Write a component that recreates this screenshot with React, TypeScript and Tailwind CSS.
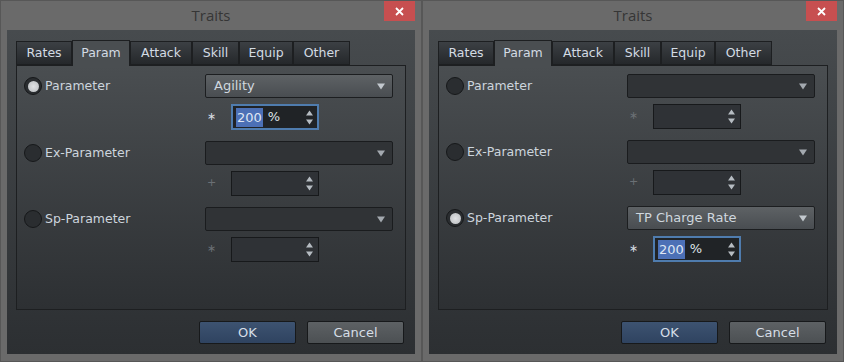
import React from "react";

type Active = "param" | "sp";

const FONT = { fontFamily: '"DejaVu Sans", sans-serif' };

const TABS = [
  { label: "Rates", w: "w-[56px]" },
  { label: "Param", w: "w-[58px]" },
  { label: "Attack", w: "w-[62px]" },
  { label: "Skill", w: "w-[47px]" },
  { label: "Equip", w: "w-[54px]" },
  { label: "Other", w: "w-[57px]" },
];

function Radio({ on }: { on: boolean }) {
  return (
    <div className="flex h-[18px] w-[18px] shrink-0 items-center justify-center rounded-full border border-[#16181a] bg-[#2a2d30]">
      {on && <div className="h-[11px] w-[11px] rounded-full bg-radial from-[#e0e2e4] to-[#b8bbbe]" />}
    </div>
  );
}

function DownArrow({ color }: { color: string }) {
  return (
    <svg width="8" height="7" viewBox="0 0 8 7">
      <path d="M0 0.5H8L4 6.5Z" fill={color} />
    </svg>
  );
}

function Combo({ value }: { value?: string }) {
  const enabled = !!value;
  return (
    <div
      className={
        enabled
          ? "flex h-[24px] w-[188px] items-center justify-between rounded-[2px] border border-[#1c1e20] bg-linear-to-b from-[#5e6265] to-[#494d51] pl-[8px] pr-[7px]"
          : "flex h-[24px] w-[188px] items-center justify-end rounded-[2px] border border-[#1a1c1e] bg-[#303336] pr-[7px]"
      }
    >
      {enabled && <span className="text-[13px] text-[#cfd7df]">{value}</span>}
      <DownArrow color={enabled ? "#c2c8ce" : "#a3a9af"} />
    </div>
  );
}

function Spin({ sym, on }: { sym: string; on: boolean }) {
  return (
    <div className="mt-[6px] flex items-center pl-[181px]">
      <span className={`w-[13px] text-center text-[11px] ${on ? "text-[#d8dde2]" : "text-[#6b7075]"}`}>{sym}</span>
      <div
        className={
          on
            ? "ml-[13px] flex h-[26px] w-[88px] items-center justify-between border-2 border-[#4f7cae] bg-[#202326] pl-[3px] pr-[4px]"
            : "ml-[13px] flex h-[25px] w-[88px] items-center justify-end border border-[#17191b] bg-[#2f3236] pr-[5px]"
        }
      >
        {on && (
          <div className="flex items-center text-[13px]">
            <span className="bg-[#4c70b6] px-[1px] leading-[19px] text-[#dfe6f3]">200</span>
            <span className="ml-[5px] text-[#dfe3e8]">%</span>
          </div>
        )}
        <svg width="7" height="15" viewBox="0 0 7 15">
          <path d="M0 5.5H7L3.5 0.5Z" fill="#b6bcc2" />
          <path d="M0 9.5H7L3.5 14.5Z" fill="#b6bcc2" />
        </svg>
      </div>
    </div>
  );
}

function ParamRow({ label, on, value, sym }: { label: string; on: boolean; value: string; sym: string }) {
  return (
    <div className="flex flex-col">
      <div className="flex items-center">
        <div className="flex w-[181px] items-center gap-[3px]">
          <Radio on={on} />
          <span className="text-[12.5px] text-[#cdd5dd]">{label}</span>
        </div>
        <Combo value={on ? value : undefined} />
      </div>
      <Spin sym={sym} on={on} />
    </div>
  );
}

function TraitsWindow({ active }: { active: Active }) {
  return (
    <div className="flex h-[362px] w-[422px] flex-col border border-[#575757] bg-[#6a6a6a]" style={FONT}>
      <div className="relative flex h-[29px] items-center justify-center">
        <span className="text-[15px] text-[#363636]" style={{ fontFamily: '"Open Sans", sans-serif' }}>
          Traits
        </span>
        <div className="absolute right-[6px] top-0 flex h-[20px] w-[31px] items-center justify-center bg-[#c74f50]">
          <svg width="9" height="9" viewBox="0 0 9 9">
            <path d="M1 1L8 8M8 1L1 8" stroke="#fff" strokeWidth="1.8" />
          </svg>
        </div>
      </div>

      <div className="mx-[6px] flex h-[324px] flex-col bg-linear-to-b from-[#474b4e] to-[#2c2f32] pl-[9px] pt-[11px]">
        <div className="flex h-[24px] items-end">
          {TABS.map((t) => {
            const sel = t.label === "Param";
            return (
              <div
                key={t.label}
                className={
                  sel
                    ? `relative z-10 -mb-px flex h-[26px] ${t.w} items-center justify-center border border-b-0 border-[#1d1f21] bg-[#4a4e51] text-[12.5px] text-[#d3dbe3]`
                    : `flex h-[24px] ${t.w} items-center justify-center border border-[#1d1f21] bg-linear-to-b from-[#3c4044] to-[#25282b] text-[12.5px] text-[#d3dbe3]`
                }
              >
                {t.label}
              </div>
            );
          })}
        </div>

        <div className="flex h-[245px] w-[390px] flex-col gap-[11px] border border-[#1d1f21] bg-linear-to-b from-[#4a4e51] to-[#2d3033] pl-[7px] pt-[8px]">
          <ParamRow label="Parameter" on={active === "param"} value="Agility" sym="∗" />
          <ParamRow label="Ex-Parameter" on={false} value="" sym="+" />
          <ParamRow label="Sp-Parameter" on={active === "sp"} value="TP Charge Rate" sym="∗" />
        </div>

        <div className="mt-[11px] flex justify-end gap-[11px] pr-[11px]">
          <button className="h-[23px] w-[97px] rounded-[2px] border border-[#17191b] bg-linear-to-b from-[#3d5371] to-[#2f4360] text-[13px] text-[#d6dee6]">
            OK
          </button>
          <button className="h-[23px] w-[97px] rounded-[2px] border border-[#17191b] bg-linear-to-b from-[#5d6164] to-[#4c5053] text-[13px] text-[#d6dee6]">
            Cancel
          </button>
        </div>
      </div>
    </div>
  );
}

export default function App() {
  return (
    <div className="flex h-[362px] w-[844px]">
      <TraitsWindow active="param" />
      <TraitsWindow active="sp" />
    </div>
  );
}
